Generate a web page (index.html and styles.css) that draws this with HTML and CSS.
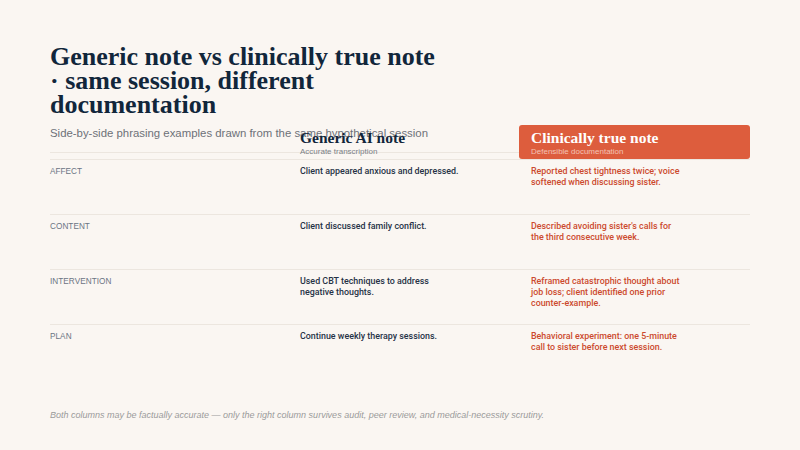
FILE: index.html
```html
<!DOCTYPE html>
<html>
<head>
<meta charset="utf-8">
<link rel="stylesheet" href="styles.css">
</head>
<body>
<main class="page">
  <h1 class="title">Generic note vs clinically true note ·&nbsp;same session, different documentation</h1>
  <p class="subtitle">Side-by-side phrasing examples drawn from the same hypothetical session</p>
  <section class="table">
    <div class="head">
      <div class="hcell hlabel"></div>
      <div class="hcell hgeneric">
        <div class="htitle">Generic AI note</div>
        <div class="hsub">Accurate transcription</div>
      </div>
      <div class="hcell htrue">
        <div class="htitle">Clinically true note</div>
        <div class="hsub">Defensible documentation</div>
      </div>
    </div>
    <div class="row">
      <div class="label">Affect</div>
      <div class="generic">Client appeared anxious and depressed.</div>
      <div class="true">Reported chest tightness twice; voice softened when discussing sister.</div>
    </div>
    <div class="row">
      <div class="label">Content</div>
      <div class="generic">Client discussed family conflict.</div>
      <div class="true">Described avoiding sister's calls for the third consecutive week.</div>
    </div>
    <div class="row">
      <div class="label">Intervention</div>
      <div class="generic">Used CBT techniques to address negative thoughts.</div>
      <div class="true">Reframed catastrophic thought about job loss; client identified one prior counter-example.</div>
    </div>
    <div class="row">
      <div class="label">Plan</div>
      <div class="generic">Continue weekly therapy sessions.</div>
      <div class="true">Behavioral experiment: one 5-minute call to sister before next session.</div>
    </div>
  </section>
  <p class="footnote">Both columns may be factually accurate — only the right column survives audit, peer review, and medical-necessity scrutiny.</p>
</main>
</body>
</html>
```
FILE: styles.css
```css
html, body {
  margin: 0;
  padding: 0;
  background: #faf6f2;
}
.page {
  width: 800px;
  height: 450px;
  box-sizing: border-box;
  padding: 45px 50px 0 50px;
  font-family: "Liberation Sans", Arial, sans-serif;
}
.title {
  margin: 0;
  width: 400px;
  font-family: "Liberation Serif", "Times New Roman", serif;
  font-weight: 700;
  font-size: 26px;
  line-height: 24px;
  color: #11263b;
}
.subtitle {
  margin: 8px 0 0 0;
  font-size: 11.4px;
  line-height: 16px;
  color: #6d7178;
}
.table {
  margin-top: -16px;
  width: 700px;
}
.head {
  display: grid;
  grid-template-columns: 250px 219px 231px;
  height: 34px;
}
.hcell.hlabel, .hcell.hgeneric {
  height: 27px;
  border-bottom: 1px solid #ece6df;
}
.hgeneric .htitle {
  font-family: "Liberation Serif", "Times New Roman", serif;
  font-weight: 700;
  font-size: 15.5px;
  line-height: 18px;
  margin-top: 4px;
  color: #11263b;
}
.hgeneric .hsub {
  font-size: 8px;
  line-height: 10px;
  color: #7b7f86;
}
.htrue {
  background: #dd5d3d;
  border-radius: 3px;
  padding: 4px 12px 0 12px;
  box-sizing: border-box;
  height: 34px;
}
.htrue .htitle {
  font-family: "Liberation Serif", "Times New Roman", serif;
  font-weight: 700;
  font-size: 15.5px;
  line-height: 18px;
  color: #ffffff;
}
.htrue .hsub {
  font-size: 8px;
  line-height: 10px;
  color: #f3c2b4;
}
.row {
  display: grid;
  grid-template-columns: 250px 219px 231px;
  border-top: 1px solid #ece6df;
  height: 55px;
  box-sizing: border-box;
  padding-top: 6px;
}
.label {
  font-size: 8.2px;
  line-height: 11px;
  letter-spacing: 0.05px;
  text-transform: uppercase;
  color: #6b7483;
}
.generic {
  font-family: Roboto, "Liberation Sans", sans-serif;
  font-size: 8.9px;
  line-height: 11px;
  font-weight: 500;
  color: #263246;
  max-width: 162px;
}
.true {
  font-family: Roboto, "Liberation Sans", sans-serif;
  font-size: 8.9px;
  line-height: 11px;
  font-weight: 500;
  color: #cc4a2e;
  padding-left: 12px;
  max-width: 151px;
}
.footnote {
  margin: 30px 0 0 0;
  font-size: 9px;
  line-height: 12px;
  font-style: italic;
  color: #9b9b9b;
}
```
